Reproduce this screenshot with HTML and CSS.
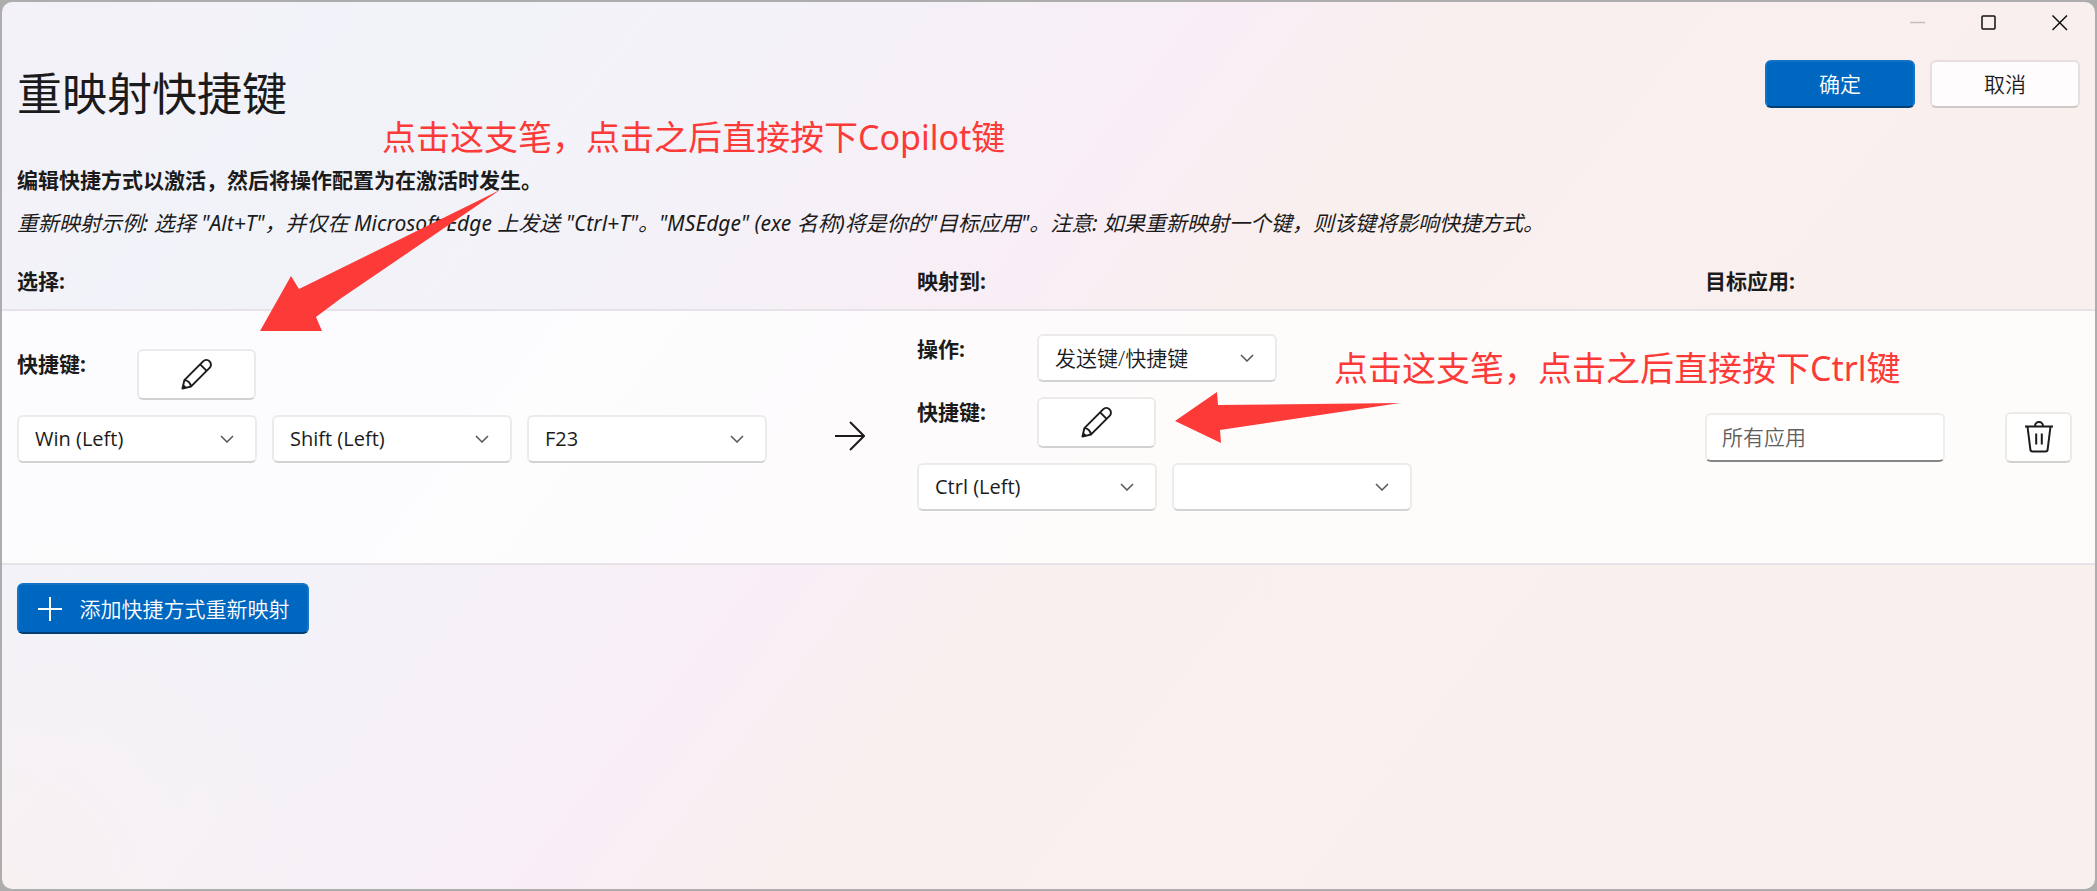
FILE: index.html
```html
<!DOCTYPE html>
<html lang="zh-CN">
<head>
<meta charset="utf-8">
<title>重映射快捷键</title>
<link rel="stylesheet" href="styles.css">
</head>
<body>
<svg width="0" height="0" class="symbols" aria-hidden="true">
  <symbol id="chevron" viewBox="0 0 14 8"><path d="M1 1l6 6 6-6" fill="none" stroke="currentColor" stroke-width="1.5"/></symbol>
  <symbol id="pencil" viewBox="0 0 32 32"><path d="M1.500 30.500 L3.500 21.800 L22.800 2.500 A4.700 4.700 0 0 1 29.500 9.200 L10.200 28.500 Z M19.800 5.500 L26.500 12.200 M3.500 21.800 Q9.500 22.500 10.200 28.500" fill="none" stroke="currentColor" stroke-width="2" stroke-linejoin="round"/><path d="M1.500 30.500l1-4.500 3.500 3.500z" fill="currentColor"/></symbol>
</svg>
<div class="window">
  <div class="titlebar">
    <button class="caption caption-off" aria-label="最小化" disabled><svg width="16" height="16" viewBox="0 0 16 16"><path d="M0 7.500h15"/></svg></button>
    <button class="caption" aria-label="最大化"><svg width="16" height="16" viewBox="0 0 16 16"><rect x="1" y="1" width="13" height="13" rx="1"/></svg></button>
    <button class="caption" aria-label="关闭"><svg width="16" height="16" viewBox="0 0 16 16"><path d="M.5.5l14.500 14.500M15 .5L.5 15"/></svg></button>
  </div>
  <header class="header">
    <h1>重映射快捷键</h1>
    <div class="actions">
      <button class="btn primary">确定</button>
      <button class="btn">取消</button>
    </div>
  </header>
  <main>
    <div class="intro">
      <p class="lead">编辑快捷方式以激活，然后将操作配置为在激活时发生。</p>
      <p class="example">重新映射示例: 选择 "Alt+T"，并仅在 Microsoft Edge 上发送 "Ctrl+T"。"MSEdge" (exe 名称)将是你的"目标应用"。注意: 如果重新映射一个键，则该键将影响快捷方式。</p>
    </div>
    <div class="columns heads">
      <h2 class="col-from">选择:</h2>
      <h2 class="col-to">映射到:</h2>
      <h2 class="col-app">目标应用:</h2>
    </div>
    <section class="columns mapping">
      <div class="col-from keys from">
        <div class="field">
          <span class="label">快捷键:</span>
          <button class="btn edit" aria-label="编辑快捷键"><svg width="31" height="31"><use href="#pencil"/></svg></button>
        </div>
        <div class="combos">
          <div class="combo"><select aria-label="按键 1"><option>Win (Left)</option></select><svg width="14" height="8"><use href="#chevron"/></svg></div>
          <div class="combo"><select aria-label="按键 2"><option>Shift (Left)</option></select><svg width="14" height="8"><use href="#chevron"/></svg></div>
          <div class="combo"><select aria-label="按键 3"><option>F23</option></select><svg width="14" height="8"><use href="#chevron"/></svg></div>
        </div>
      </div>
      <svg class="col-arrow middle" width="30" height="32" viewBox="0 0 30 32"><path d="M0 15h29M15 1l14 14-14 14" fill="none" stroke="#1b1b1b" stroke-width="2"/></svg>
      <div class="col-to keys">
        <div class="field">
          <label class="label" for="action">操作:</label>
          <div class="combo"><select id="action"><option>发送键/快捷键</option></select><svg width="14" height="8"><use href="#chevron"/></svg></div>
        </div>
        <div class="field">
          <span class="label">快捷键:</span>
          <button class="btn edit" aria-label="编辑目标快捷键"><svg width="31" height="31"><use href="#pencil"/></svg></button>
        </div>
        <div class="combos">
          <div class="combo"><select aria-label="目标按键 1"><option>Ctrl (Left)</option></select><svg width="14" height="8"><use href="#chevron"/></svg></div>
          <div class="combo"><select aria-label="目标按键 2"><option></option></select><svg width="14" height="8"><use href="#chevron"/></svg></div>
        </div>
      </div>
      <input class="col-app middle app" type="text" placeholder="所有应用" aria-label="目标应用">
      <button class="btn col-delete middle delete" aria-label="删除"><svg width="30" height="32" viewBox="0 0 30 32"><path d="M1 5.500h28M3.500 5.500l2.800 22.500a2.500 2.500 0 0 0 2.500 2.500h12.400a2.500 2.500 0 0 0 2.500-2.500l2.800-22.500M11 5a4 4 0 0 1 8 0M12.200 12.500v11M17.800 12.500v11" fill="none" stroke="currentColor" stroke-width="2"/></svg></button>
    </section>
    <button class="btn primary add"><svg width="26" height="26" viewBox="0 0 26 26"><path d="M13 1v24M1 13h24" stroke="#fff" stroke-width="2"/></svg>添加快捷方式重新映射</button>
  </main>
  <div class="note note-from">点击这支笔，点击之后直接按下Copilot键</div>
  <svg class="pointer pointer-from" width="240" height="142" viewBox="0 0 240 142"><path d="M0 141L31 86l8 13L240 0 80 109 56 127l6 14z"/></svg>
  <div class="note note-to">点击这支笔，点击之后直接按下Ctrl键</div>
  <svg class="pointer pointer-to" width="226" height="52" viewBox="0 0 226 52"><path d="M0 29L42 0l1 13 182-2L45 38l1 13z"/></svg>
</div>
</body>
</html>
```
FILE: styles.css
```css
* { box-sizing: border-box; }
html, body { height: 100%; }
body {
  margin: 0;
  background: #adadae;
  color: #1b1b1b;
  font: 350 21px/28px "Noto Sans", "Noto Sans CJK SC", sans-serif;
}
h1, h2, p { margin: 0; }
button, select, input { font: inherit; color: inherit; margin: 0; }
.symbols { position: absolute; }

.window {
  position: relative;
  min-height: 100%;
  border: 2px solid #adadae;
  border-radius: 12px;
  background:
    radial-gradient(circle at 0 100%, #f8f1f2, rgba(248, 241, 242, 0) 360px),
    linear-gradient(128deg, #f4f1f8 0%, #f1f3f9 14%, #f3f2f8 28%, #f9eef6 44%, #f9efef 52%, #f9f0ed 100%);
}

.titlebar { display: flex; justify-content: flex-end; height: 42px; }
.caption {
  width: 71px;
  height: 42px;
  padding: 0;
  border: 0;
  background: none;
  color: #111;
}
.caption svg { display: block; margin: auto; fill: none; stroke: currentColor; stroke-width: 1.5; }
.caption-off { color: #c4bebc; }

.header { display: flex; justify-content: space-between; padding: 16px 15px 0; }
h1 { margin-top: 4px; font-size: 45px; line-height: 60px; font-weight: 400; }
.actions { display: flex; gap: 15px; }

.btn {
  display: flex;
  align-items: center;
  justify-content: center;
  width: 150px;
  height: 48px;
  padding: 0;
  border: 2px solid rgba(0, 0, 0, .07);
  border-bottom-color: rgba(0, 0, 0, .17);
  border-radius: 6px;
  background: rgba(255, 255, 255, .8);
  background-clip: padding-box;
}
.primary {
  border-color: #1473c5;
  border-bottom-color: #003e73;
  background: #0067c0;
  color: #fff;
}

.intro { display: grid; gap: 15px; padding: 42px 15px 30px; }
.lead { font-weight: 700; }
.example { font-style: italic; font-weight: 400; }

.columns {
  display: grid;
  grid-template-columns: minmax(0, 818fr) minmax(0, 82fr) minmax(0, 788fr) minmax(0, 300fr) minmax(0, 75fr);
  padding: 0 15px;
}
.col-from { grid-column: 1; }
.col-arrow { grid-column: 2; }
.col-to { grid-column: 3; }
.col-app { grid-column: 4; }
.col-delete { grid-column: 5; }
.heads { padding-bottom: 14px; }
h2 { font-size: 21px; line-height: 28px; font-weight: 700; }

.mapping {
  padding-top: 23px;
  padding-bottom: 52px;
  border: solid #e6e2e8;
  border-width: 2px 0;
  background: rgba(255, 255, 255, .76);
}
.middle { align-self: center; margin-top: 29px; }
.keys { display: grid; gap: 15px; align-content: start; }
.from { padding-top: 15px; }
.field { display: flex; align-items: flex-start; }
.label { width: 120px; margin-top: 1px; font-weight: 700; }
.edit { width: 119px; height: 51px; background: #fff; background-clip: padding-box; }
.combos { display: flex; gap: 15px; }
.combo { position: relative; width: 240px; }
.combo svg { position: absolute; right: 23px; top: 20px; color: #555; pointer-events: none; }
select {
  display: block;
  appearance: none;
  width: 100%;
  height: 48px;
  padding: 0 40px 0 16px;
  border: 2px solid #ebebec;
  border-bottom-color: #d2d2d3;
  border-radius: 6px;
  background: #fff;
  font-family: "Open Sans", "Noto Sans CJK SC", sans-serif;
  font-size: 20px;
  font-weight: 400;
}
#action { font-size: 21px; font-weight: 350; }
.app {
  width: 240px;
  height: 49px;
  padding: 0 15px;
  border: 2px solid #ededec;
  border-bottom-color: #868686;
  border-radius: 6px;
  background: #fff;
}
.app::placeholder { color: #606060; opacity: 1; }
.delete { width: 67px; height: 51px; }
.add { gap: 17px; width: 292px; height: 51px; margin: 18px 15px; }

.note { position: absolute; color: #fc3a38; font-size: 34px; line-height: 46px; font-weight: 400; white-space: nowrap; }
.note-from { left: 380px; top: 112px; }
.note-to { left: 1332px; top: 343px; }
.pointer { position: absolute; fill: #fc3a38; pointer-events: none; }
.pointer-from { left: 258px; top: 188px; }
.pointer-to { left: 1173px; top: 390px; }
```
